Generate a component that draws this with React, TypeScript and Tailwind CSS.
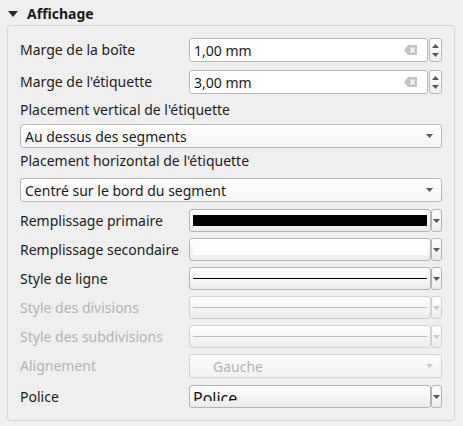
import React from "react";

const FONT = { fontFamily: '"Noto Sans", "Open Sans", sans-serif' };

function Caret({ disabled = false }: { disabled?: boolean }) {
  return (
    <svg width="7" height="4" viewBox="0 0 7 4" aria-hidden="true">
      <path d="M0 0h7L3.5 4z" fill={disabled ? "#c8c8c8" : "#5a5a5a"} />
    </svg>
  );
}

function Label({ text, disabled = false }: { text: string; disabled?: boolean }) {
  return (
    <div
      className={`w-[169px] shrink-0 text-[14px] leading-[18px] ${
        disabled ? "text-[#b4b4b4]" : "text-[#1c1c1c]"
      }`}
    >
      {text}
    </div>
  );
}

function SpinBox({ value }: { value: string }) {
  return (
    <div className="flex h-[24px] flex-1">
      <div className="flex flex-1 items-center rounded-[3px] border border-[#b9b9b9] bg-white pl-[4px] pr-[10px]">
        <span className="flex-1 text-[14px] text-[#1a1a1a]">{value}</span>
        {/* effacer */}
        <svg width="13" height="10" viewBox="0 0 13 10" aria-hidden="true">
          <path d="M4 0h9v10H4L0 5z" fill="#c4c4c4" />
          <path d="M6.5 2.5l4 5M10.5 2.5l-4 5" stroke="#fff" strokeWidth="1.3" />
        </svg>
      </div>
      <div className="ml-[1px] flex w-[13px] flex-col items-center justify-center gap-[5px] rounded-[3px] border border-[#b9b9b9] bg-gradient-to-b from-white to-[#f0f0f0]">
        <svg width="7" height="4" viewBox="0 0 7 4" aria-hidden="true">
          <path d="M0 4h7L3.5 0z" fill="#5a5a5a" />
        </svg>
        <svg width="7" height="4" viewBox="0 0 7 4" aria-hidden="true">
          <path d="M0 0h7L3.5 4z" fill="#5a5a5a" />
        </svg>
      </div>
    </div>
  );
}

function Combo({ value }: { value: string }) {
  return (
    <div className="flex h-[24px] items-center rounded-[3px] border border-[#b9b9b9] bg-gradient-to-b from-white to-[#f6f6f6] pl-[4px] pr-[8px]">
      <span className="flex-1 text-[14px] text-[#1a1a1a]">{value}</span>
      <Caret />
    </div>
  );
}

function SplitButton({
  children,
  disabled = false,
}: {
  children: React.ReactNode;
  disabled?: boolean;
}) {
  const border = disabled ? "border-[#d2d2d2]" : "border-[#b4b4b4]";
  return (
    <div className="flex h-[23px] flex-1">
      <div
        className={`flex flex-1 flex-col justify-center rounded-[3px] border ${border} bg-gradient-to-b from-white to-[#ececec] px-[3px]`}
      >
        {children}
      </div>
      <div
        className={`flex w-[11px] items-center justify-center rounded-[3px] border ${border} bg-gradient-to-b from-white to-[#ececec]`}
      >
        <Caret disabled={disabled} />
      </div>
    </div>
  );
}

export default function App() {
  return (
    <div className="h-[426px] w-[463px] overflow-hidden bg-[#efefef]" style={FONT}>
      {/* titre */}
      <div className="flex h-[25px] items-center pl-[8px] pt-[2px]">
        <svg width="10" height="6" viewBox="0 0 10 6" aria-hidden="true">
          <path d="M0 0h10L5 6z" fill="#2a2a2a" />
        </svg>
        <span className="ml-[9px] text-[14px] font-bold text-[#1a1a1a]">Affichage</span>
      </div>

      <div className="ml-[7px] flex h-[396px] w-[448px] flex-col rounded-[3px] border border-[#d6d6d6] px-[12px] pt-[12px]">
        <div className="flex items-center">
          <Label text="Marge de la boîte" />
          <SpinBox value="1,00 mm" />
        </div>
        <div className="mt-[8px] flex items-center">
          <Label text="Marge de l'étiquette" />
          <SpinBox value="3,00 mm" />
        </div>

        <div className="mt-[7px] text-[14px] leading-[18px] text-[#1c1c1c]">
          Placement vertical de l'étiquette
        </div>
        <div className="mt-[5px]">
          <Combo value="Au dessus des segments" />
        </div>
        <div className="mt-[4px] text-[14px] leading-[18px] text-[#1c1c1c]">
          Placement horizontal de l'étiquette
        </div>
        <div className="mt-[8px]">
          <Combo value="Centré sur le bord du segment" />
        </div>

        <div className="mt-[7px] flex items-center">
          <Label text="Remplissage primaire" />
          <SplitButton>
            <div className="h-[11px] bg-black" />
          </SplitButton>
        </div>
        <div className="mt-[6px] flex items-center">
          <Label text="Remplissage secondaire" />
          <SplitButton>
            <div className="h-[11px] bg-white" />
          </SplitButton>
        </div>
        <div className="mt-[6px] flex items-center">
          <Label text="Style de ligne" />
          <SplitButton>
            <div className="h-[1px] bg-black" />
          </SplitButton>
        </div>
        <div className="mt-[6px] flex items-center">
          <Label text="Style des divisions" disabled />
          <SplitButton disabled>
            <div className="h-[1px] bg-[#bdbdbd]" />
          </SplitButton>
        </div>
        <div className="mt-[6px] flex items-center">
          <Label text="Style des subdivisions" disabled />
          <SplitButton disabled>
            <div className="h-[1px] bg-[#bdbdbd]" />
          </SplitButton>
        </div>
        <div className="mt-[6px] flex items-center">
          <Label text="Alignement" disabled />
          <div className="flex h-[24px] flex-1 items-center rounded-[3px] border border-[#d2d2d2] bg-gradient-to-b from-[#fbfbfb] to-[#f2f2f2] pl-[23px] pr-[8px]">
            <span className="flex-1 text-[14px] text-[#b4b4b4]">Gauche</span>
            <Caret disabled />
          </div>
        </div>
        <div className="mt-[7px] flex items-center">
          <Label text="Police" />
          <div className="flex h-[23px] flex-1">
            <div className="flex-1 rounded-[3px] border border-[#b4b4b4] bg-gradient-to-b from-white to-[#ececec] pl-[3px]">
              {/* le texte de la police déborde et se trouve coupé, comme dans Qt */}
              <div className="h-[15px] overflow-hidden">
                <div className="pt-[4px] text-[16px] leading-[16px] text-[#111]">Police</div>
              </div>
            </div>
            <div className="flex w-[11px] items-center justify-center rounded-[3px] border border-[#b4b4b4] bg-gradient-to-b from-white to-[#ececec]">
              <Caret />
            </div>
          </div>
        </div>
      </div>
    </div>
  );
}
